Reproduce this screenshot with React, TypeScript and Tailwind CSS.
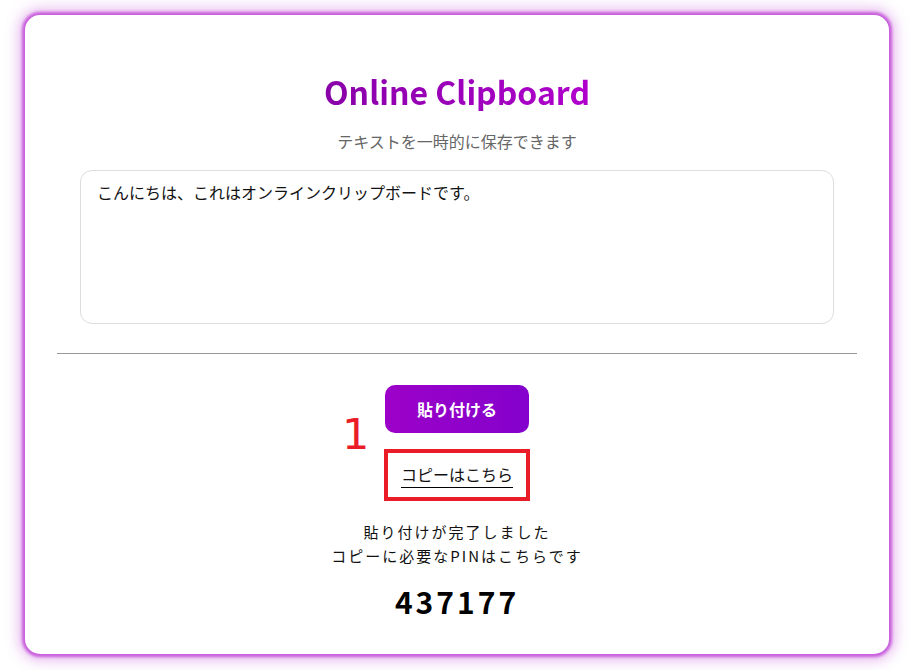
export default function App() {
  return (
    <div className="min-h-screen bg-white pt-[15px] pl-[25px] pr-[21px] pb-[16px] font-['Noto_Sans_CJK_JP','Noto_Sans',sans-serif]">
      <div className="relative flex h-[639px] flex-col items-center rounded-[15px] bg-white px-8 pt-[56px] shadow-[0_0_3px_3px_#c85edc,0_0_14px_6px_rgba(200,96,220,0.45)]">
        {/* Header */}
        <h1 className="bg-linear-to-r from-[#8800a8] to-[#b000cc] bg-clip-text text-[32px] font-bold leading-[1.25] text-transparent">
          Online Clipboard
        </h1>
        <p className="mt-[19px] text-[16px] leading-[22px] text-[#666]">テキストを一時的に保存できます</p>

        {/* Text box */}
        <textarea
          className="mt-[18px] h-[154px] w-[754px] resize-none rounded-[12px] border border-[#dddddd] px-4 py-[10px] text-[16px] leading-[22px] text-[#111] outline-none"
          defaultValue="こんにちは、これはオンラインクリップボードです。"
        />

        <hr className="mt-[29px] w-full border-t border-[#999]" />

        {/* Paste button */}
        <button className="mt-[31px] h-[48px] w-[144px] rounded-[10px] bg-linear-to-r from-[#9c00c8] to-[#8400cc] text-[16px] font-bold text-white">
          貼り付ける
        </button>

        {/* Copy link + annotation */}
        <div className="relative mt-[16px] flex h-[52px] w-[146px] items-center justify-center border-4 border-[#ea1c28]">
          <a href="#" className="border-b border-black pb-[2px] text-[16px] leading-[22px] text-[#111]">
            コピーはこちら
          </a>
          <span className="absolute left-[-46px] top-[-40px] font-['DejaVu_Sans',sans-serif] text-[43px] leading-none text-[#ea1c28]">
            1
          </span>
        </div>

        {/* Result */}
        <div className="mt-[19px] text-center text-[15px] leading-[24px] tracking-[2px] text-[#111]">
          <p>貼り付けが完了しました</p>
          <p>コピーに必要なPINはこちらです</p>
        </div>
        <p className="mt-[13px] text-[30px] font-bold leading-[40px] tracking-[3px] text-black">437177</p>
      </div>
    </div>
  );
}
